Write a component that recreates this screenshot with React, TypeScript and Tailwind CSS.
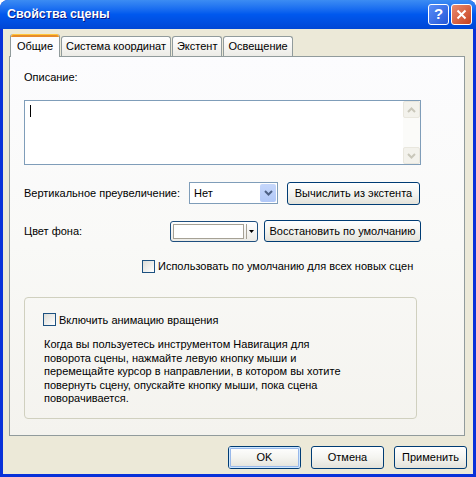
import React from 'react'

const FONT = "font-['Tahoma','Liberation_Sans',sans-serif]"

// ── XP-style primitives ───────────────────────────────────────────────────────

function XpButton({
  children,
  className = '',
  isDefault = false,
}: {
  children: React.ReactNode
  className?: string
  isDefault?: boolean
}) {
  return (
    <div
      className={`flex items-center justify-center rounded-[3px] border border-[#003C74] bg-gradient-to-b from-[#FFFFFF] via-[#F4F4F0] to-[#E3E2DA] text-[11px] text-black ${className}`}
    >
      <div
        className={`flex h-full w-full items-center justify-center rounded-[2px] ${
          isDefault ? 'shadow-[inset_0_0_0_1px_#CEE7FF,inset_0_0_0_2px_#98B8EA]' : ''
        }`}
      >
        {children}
      </div>
    </div>
  )
}

function XpCheckbox() {
  return (
    <span className="block h-[13px] w-[13px] shrink-0 border border-[#1C5180] bg-gradient-to-br from-[#DCDCD7] to-[#FFFFFF]" />
  )
}

function Chevron({ color }: { color: string }) {
  return (
    <svg width="9" height="6" viewBox="0 0 9 6">
      <path d="M1 1 L4.5 4.5 L8 1" fill="none" stroke={color} strokeWidth="2" />
    </svg>
  )
}

// ── Tabs ──────────────────────────────────────────────────────────────────────

const TABS = ['Общие', 'Система координат', 'Экстент', 'Освещение']

function TabStrip() {
  return (
    <div className="relative z-10 flex h-[21px] items-end pl-[1px]">
      {TABS.map((t, i) =>
        i === 0 ? (
          <div
            key={t}
            className="-mb-[1px] flex h-[23px] w-[50px] flex-col overflow-hidden rounded-t-[3px] border-x border-[#919B9C] bg-[#FCFCFE]"
          >
            <div className="h-[3px] rounded-t-[3px] bg-[#E68B2C] shadow-[inset_0_1px_0_#FFC73C]" />
            <div className="flex flex-1 items-center justify-center pb-[2px] text-[11px]">
              {t}
            </div>
          </div>
        ) : (
          <div
            key={t}
            className="ml-[1px] flex h-[20px] items-center rounded-t-[3px] border-x border-t border-[#919B9C] bg-gradient-to-b from-[#FFFFFF] to-[#ECEBE6] px-[4px] text-[11px]"
          >
            {t}
          </div>
        ),
      )}
    </div>
  )
}

// ── Component ─────────────────────────────────────────────────────────────────

export default function App() {
  return (
    <div
      className={`${FONT} flex h-[477px] w-[476px] flex-col overflow-hidden rounded-t-[8px] bg-[#0831D9] text-[11px] text-black`}
    >
      {/* Title bar */}
      <div className="flex h-[29px] shrink-0 items-center bg-gradient-to-b from-[#3C8CF3] via-[#0058EE] to-[#0046D5] pl-[7px] pr-[4px]">
        <span className="flex-1 text-[12.5px] font-bold text-white [text-shadow:1px_1px_0_#0A1883]">
          Свойства сцены
        </span>
        <div className="flex gap-[2px]">
          <div className="flex h-[21px] w-[21px] items-center justify-center rounded-[3px] border border-white bg-gradient-to-br from-[#5A8DF7] to-[#2457D8] text-[15px] font-bold text-white">
            ?
          </div>
          <div className="flex h-[21px] w-[21px] items-center justify-center rounded-[3px] border border-white bg-gradient-to-br from-[#E98A6E] to-[#C7401C]">
            <svg width="11" height="11" viewBox="0 0 11 11">
              <path d="M1.5 1.5 L9.5 9.5 M9.5 1.5 L1.5 9.5" stroke="white" strokeWidth="2" />
            </svg>
          </div>
        </div>
      </div>

      {/* Client area */}
      <div className="mx-[3px] mb-[3px] flex flex-1 flex-col bg-[#ECE9D8] px-[6px] pt-[6px]">
        <TabStrip />

        {/* Tab panel */}
        <div className="flex h-[380px] w-[456px] flex-col border border-[#919B9C] bg-gradient-to-b from-[#FCFCFE] via-[#F9F9F7] to-[#F4F3EE] px-[14px]">
          <div className="mt-[14px] leading-[13px]">Описание:</div>

          {/* Description box */}
          <div className="mt-[16px] flex h-[65px] w-[397px] border border-[#7F9DB9] bg-white">
            <div className="flex-1 pl-[5px] pt-[4px]">
              <div className="h-[12px] w-[1px] bg-black" />
            </div>
            <div className="flex w-[17px] flex-col justify-between bg-[#FBFBF9]">
              <div className="flex h-[17px] items-center justify-center rounded-[2px] border border-[#E9E7DE] bg-[#F3F2EC]">
                <div className="rotate-180">
                  <Chevron color="#C9C7BA" />
                </div>
              </div>
              <div className="flex h-[17px] items-center justify-center rounded-[2px] border border-[#E9E7DE] bg-[#F3F2EC]">
                <Chevron color="#C9C7BA" />
              </div>
            </div>
          </div>

          {/* Vertical exaggeration row */}
          <div className="mt-[16px] flex h-[24px] items-center">
            <span className="w-[165px]">Вертикальное преувеличение:</span>
            <div className="flex h-[22px] w-[89px] items-center border border-[#7F9DB9] bg-white">
              <span className="flex-1 pl-[4px]">Нет</span>
              <div className="mr-[1px] flex h-[18px] w-[16px] items-center justify-center rounded-[2px] bg-gradient-to-b from-[#C6D7FB] to-[#B1C8F8]">
                <Chevron color="#4D6185" />
              </div>
            </div>
            <XpButton className="ml-[9px] h-[23px] w-[133px]">Вычислить из экстента</XpButton>
          </div>

          {/* Background colour row */}
          <div className="mt-[15px] flex h-[22px] items-center">
            <span className="w-[146px]">Цвет фона:</span>
            <div className="flex h-[21px] w-[88px] items-center rounded-[3px] border border-[#1F4F7F] bg-gradient-to-b from-[#FFFFFF] to-[#ECEBE6] pl-[2px]">
              <div className="h-[15px] w-[71px] border border-[#A6A195] bg-white" />
              <div className="mx-[2px] h-[15px] w-[1px] bg-[#A6A195]" />
              <svg width="5" height="3" viewBox="0 0 5 3">
                <path d="M0 0 H5 L2.5 3 Z" fill="black" />
              </svg>
            </div>
            <XpButton className="ml-[6px] h-[22px] w-[157px]">Восстановить по умолчанию</XpButton>
          </div>

          {/* Default checkbox */}
          <div className="mt-[16px] flex items-center gap-[3px] pl-[118px]">
            <XpCheckbox />
            <span>Использовать по умолчанию для всех новых сцен</span>
          </div>

          {/* Rotation group */}
          <div className="mt-[22px] flex h-[122px] w-[393px] flex-col rounded-[4px] border border-[#D0D0BF] pl-[18px]">
            <div className="mt-[14px] flex items-center gap-[3px]">
              <XpCheckbox />
              <span>Включить анимацию вращения</span>
            </div>
            <p className="mt-[10px] w-[312px] pl-[1px] leading-[13.5px]">
              Когда вы пользуетесь инструментом Навигация для поворота сцены,
              нажмайте левую кнопку мыши и перемещайте курсор в направлении, в
              котором вы хотите повернуть сцену, опускайте кнопку мыши, пока
              сцена поворачивается.
            </p>
          </div>
        </div>

        {/* Dialog buttons */}
        <div className="mt-[10px] flex justify-end gap-[10px]">
          <XpButton isDefault className="h-[23px] w-[73px]">
            OK
          </XpButton>
          <XpButton className="h-[23px] w-[73px]">Отмена</XpButton>
          <XpButton className="h-[23px] w-[73px]">Применить</XpButton>
        </div>
      </div>
    </div>
  )
}
